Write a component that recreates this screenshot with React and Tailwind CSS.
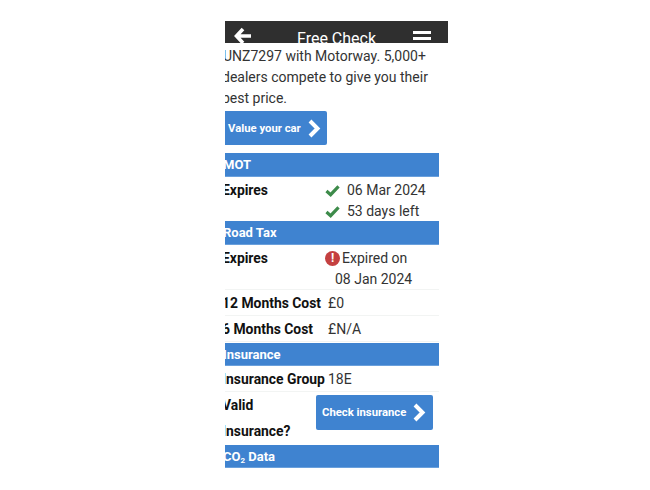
import React from "react";

function Chevron({ className }) {
  return (
    <svg viewBox="0 0 14 20" className={className} fill="none" stroke="#fff" strokeWidth="4">
      <path d="M3 2.5 L10.5 10 L3 17.5" />
    </svg>
  );
}

function Check() {
  return (
    <svg viewBox="0 0 16 14" className="w-[15px] h-[13px] shrink-0" fill="none" stroke="#3d8b4a" strokeWidth="3.4">
      <path d="M1.5 7.5 L6 11.5 L14.5 2.5" />
    </svg>
  );
}

function Bar({ children, className = "h-[24px]" }) {
  return (
    <div className={`w-[214px] bg-[#3f83d0] text-white font-bold text-[13px] leading-[23px] -indent-[2px] border-b border-[#6aa0dc] ${className}`}>
      {children}
    </div>
  );
}

function Row({ label, children, className = "" }) {
  return (
    <div className={`flex w-[214px] border-b border-[#f2f4f3] ${className}`}>
      <div className="w-[102px] shrink-0 font-bold text-[13.9px] text-[#111] -ml-[3px] whitespace-nowrap">{label}</div>
      {children}
    </div>
  );
}

export default function App() {
  return (
    <div className="min-h-[490px] bg-white pt-[21px] pl-[225px] font-['Roboto',sans-serif]">
      <div className="w-[223px] h-[460px] overflow-hidden">
        <div className="h-[22px] bg-[#2f2f2f] overflow-hidden flex items-start relative">
          <svg viewBox="0 0 18 18" className="w-[18px] h-[18px] ml-[9px] mt-[6px] shrink-0" fill="none" stroke="#fff" strokeWidth="3.6">
            <path d="M9 2 L2.5 9 L9 16 M3 9 H17" />
          </svg>
          <div className="ml-[45px] mt-[8px] text-white text-[16px] leading-[19px] whitespace-nowrap">Free Check</div>
          <div className="ml-[37px] mt-[10px] w-[18px] flex flex-col gap-[3px] shrink-0">
            <div className="h-[3px] bg-white" />
            <div className="h-[3px] bg-white" />
            <div className="h-[3px] bg-white" />
          </div>
        </div>
        <div className="-ml-[2px] text-[14px] leading-[21px] text-[#333] mt-[3px] whitespace-nowrap">
          <div>UNZ7297 with Motorway. 5,000+</div>
          <div className="-ml-[1px]">dealers compete to give you their</div>
          <div className="-ml-[1px]">best price.</div>
        </div>
        <div className="mt-[2px] h-[34px] w-[102px] bg-[#3f83d0] rounded-r-[2px] flex items-center text-white font-bold text-[11.3px] pl-[3px]">
          <span className="pt-[2px]">Value your car</span>
          <Chevron className="w-[14px] h-[21px] ml-[6px]" />
        </div>
        <div className="mt-[8px]"><Bar>MOT</Bar></div>
        <Row label="Expires" className="h-[44px] border-b-0 pt-[3px]">
          <div className="pl-[1px] text-[14px] text-[#333] leading-[21px]">
            <div className="flex items-center gap-[7px]"><Check />06 Mar 2024</div>
            <div className="flex items-center gap-[7px]"><Check />53 days left</div>
          </div>
        </Row>
        <Bar>Road Tax</Bar>
        <Row label="Expires" className="h-[45px] pt-[3px]">
          <div className="text-[14px] text-[#333] leading-[21px]">
            <div className="flex items-center gap-[2px]">
              <span className="w-[15px] h-[15px] ml-[1px] rounded-full bg-[#c44040] text-white text-[12px] font-bold leading-[15px] text-center shrink-0">!</span>
              Expired on
            </div>
            <div className="pl-[11px]">08 Jan 2024</div>
          </div>
        </Row>
        <Row label="12 Months Cost" className="h-[26px] items-center pt-[1px]">
          <div className="text-[14px] text-[#333] pl-[4px]">£0</div>
        </Row>
        <Row label="6 Months Cost" className="h-[26px] items-center pt-[1px]">
          <div className="text-[14px] text-[#333] pl-[4px]">£N/A</div>
        </Row>
        <Bar className="h-[23px] mt-[1px]">Insurance</Bar>
        <Row label="Insurance Group" className="h-[26px] items-center pt-[1px]">
          <div className="text-[14px] text-[#333] pl-[4px]">18E</div>
        </Row>
        <div className="flex w-[214px] h-[52px]">
          <div className="w-[94px] -ml-[3px] font-bold text-[13.9px] text-[#111] leading-[26px] shrink-0">
            <div>Valid</div>
            <div>Insurance?</div>
          </div>
          <div className="mt-[3px] h-[35px] w-[117px] bg-[#3f83d0] rounded-[2px] flex items-center text-white font-bold text-[11.3px] pl-[6px] shrink-0">
            <span className="pt-[2px]">Check insurance</span>
            <Chevron className="w-[14px] h-[21px] ml-[6px]" />
          </div>
        </div>
        <Bar className="h-[23px] mt-[1px]">CO<sub className="text-[8px]">2</sub> Data</Bar>
      </div>
    </div>
  );
}
